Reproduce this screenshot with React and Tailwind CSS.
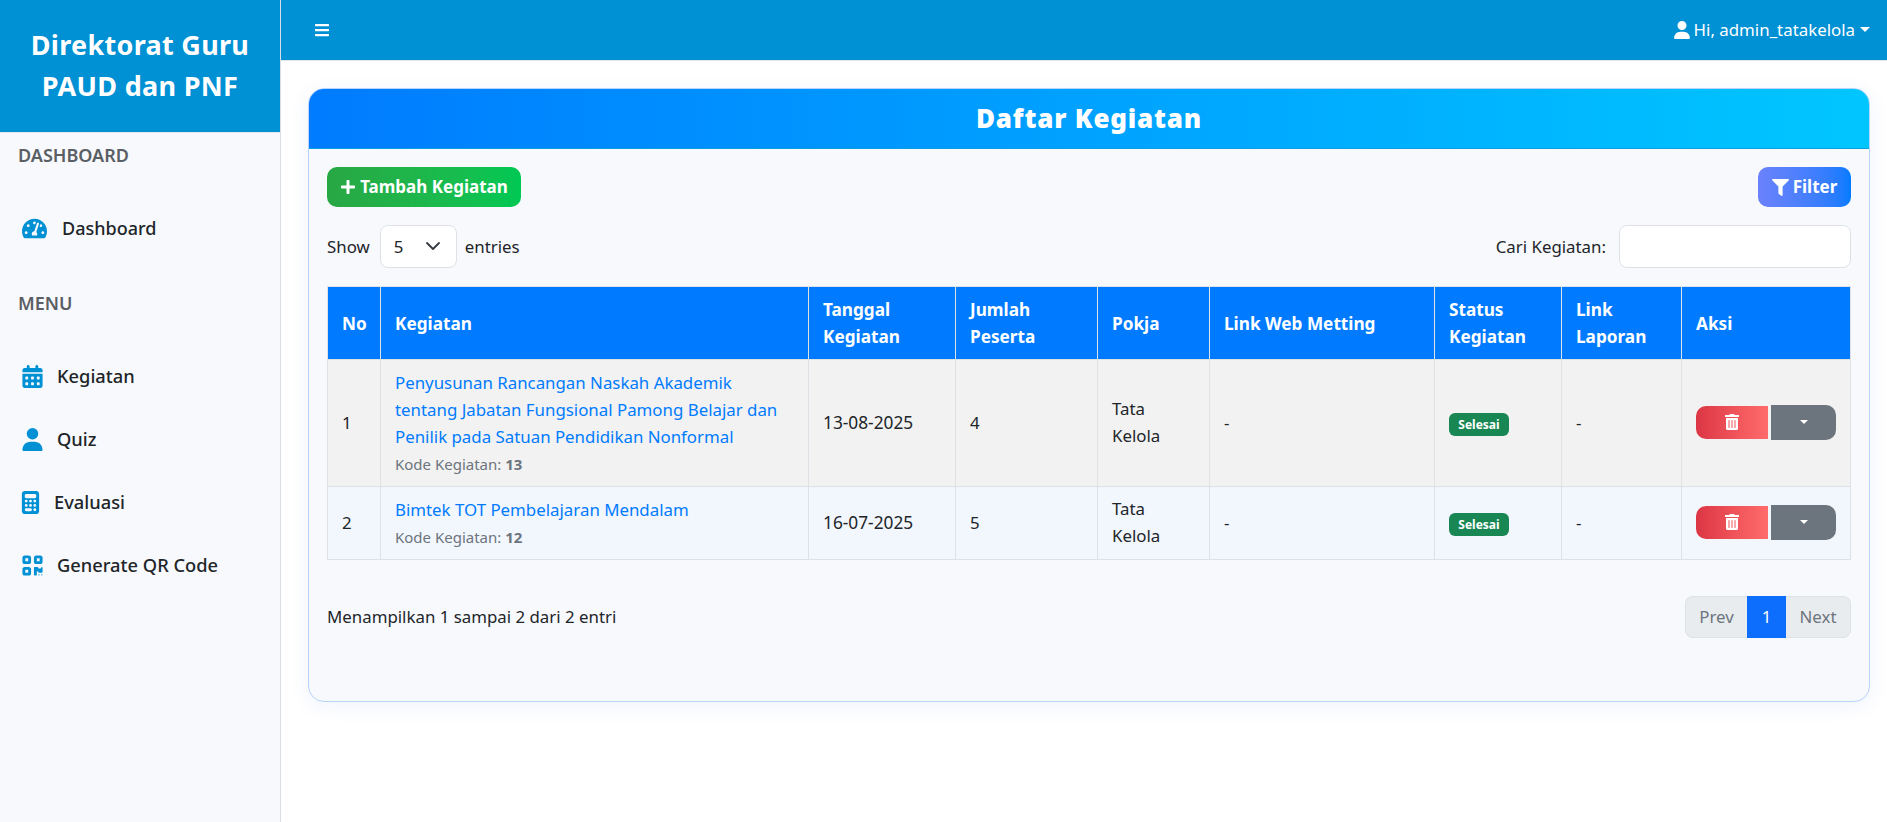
import { FaBars, FaFilter, FaPlus, FaTachometerAlt, FaTrashAlt } from 'react-icons/fa';
import { FaCalculator, FaCalendarDays, FaQrcode, FaUser } from 'react-icons/fa6';

const rows = [
  {
    no: 1,
    title: 'Penyusunan Rancangan Naskah Akademik tentang Jabatan Fungsional Pamong Belajar dan Penilik pada Satuan Pendidikan Nonformal',
    kode: 13,
    tanggal: '13-08-2025',
    peserta: 4,
  },
  {
    no: 2,
    title: 'Bimtek TOT Pembelajaran Mendalam',
    kode: 12,
    tanggal: '16-07-2025',
    peserta: 5,
  },
];

const menu = [
  { label: 'Kegiatan', icon: FaCalendarDays, w: 'w-[20px]' },
  { label: 'Quiz', icon: FaUser, w: 'w-[20px]' },
  { label: 'Evaluasi', icon: FaCalculator, w: 'w-[17px]' },
  { label: 'Generate QR Code', icon: FaQrcode, w: 'w-[20px]' },
];

const headers = ['No', 'Kegiatan', 'Tanggal Kegiatan', 'Jumlah Peserta', 'Pokja', 'Link Web Metting', 'Status Kegiatan', 'Link Laporan', 'Aksi'];

const Sidebar = () => (
  <aside className="w-[281px] shrink-0 min-h-[822px] bg-[#f8f9fc] border-r border-[#d9dee4]">
    <div className="h-[133px] bg-[#0090d4] border-b border-[#e3e6ea] flex items-center justify-center text-center">
      <h1 className="text-white font-bold text-[27px] leading-[41px] tracking-[0.3px] pb-[2px]">
        Direktorat Guru<br />PAUD dan PNF
      </h1>
    </div>
    <p className="pl-[18px] mt-[10px] text-[18px] leading-[24px] font-semibold text-[#5a5f65]">DASHBOARD</p>
    <div className="mt-[49px] pl-[22px] flex items-center h-[24px] text-[#212529]">
      <FaTachometerAlt className="text-[25px] text-[#0090d4]" />
      <span className="ml-[15px] text-[18px] font-medium">Dashboard</span>
    </div>
    <p className="pl-[18px] mt-[51px] text-[18px] leading-[24px] font-semibold text-[#5a5f65]">MENU</p>
    <nav className="mt-[49px] pl-[22px] flex flex-col gap-[39px]">
      {menu.map((item) => (
        <div key={item.label} className="flex items-center h-[24px] text-[#212529]">
          <div className={`${item.w} flex justify-center`}>
            <item.icon className="shrink-0 text-[23px] text-[#0090d4]" />
          </div>
          <span className="ml-[15px] text-[18.3px] font-medium">{item.label}</span>
        </div>
      ))}
    </nav>
  </aside>
);

const Topbar = () => (
  <header className="h-[61px] bg-[#0090d4] border-b border-[#e3e6ea] flex items-center justify-between pl-[33px] pr-[17px] text-white">
    <FaBars className="text-[16px]" />
    <div className="flex items-center text-[16.85px]">
      <FaUser className="text-[18px] mr-[3px]" />
      <span>Hi, admin_tatakelola</span>
      <span className="ml-[5px] border-x-[5px] border-t-[5px] border-x-transparent border-t-white" />
    </div>
  </header>
);

const DataTable = () => (
  <table className="w-[1523px] table-fixed border-collapse text-[16.85px] leading-[27px]">
    <colgroup>
      <col className="w-[53px]" />
      <col className="w-[428px]" />
      <col className="w-[147px]" />
      <col className="w-[142px]" />
      <col className="w-[112px]" />
      <col className="w-[225px]" />
      <col className="w-[127px]" />
      <col className="w-[120px]" />
      <col className="w-[169px]" />
    </colgroup>
    <thead>
      <tr className="h-[72px] bg-[#007bff] text-white">
        {headers.map((h) => (
          <th key={h} className="border border-[#dee2e6] px-[14px] py-[9px] text-left font-bold text-[17.2px]">{h}</th>
        ))}
      </tr>
    </thead>
    <tbody>
      {rows.map((row) => (
        <tr key={row.no} className={row.no === 1 ? 'bg-[#f2f2f2]' : 'bg-[#f2f6fd]'}>
          <td className="border border-[#dee2e6] px-[14px] pt-[8px] pb-[10px] text-[#212529]">{row.no}</td>
          <td className="border border-[#dee2e6] px-[14px] pt-[9px] pb-[11px]">
            <a href="#" className="text-[#007bff]">{row.title}</a>
            <div className="mt-[3px] text-[15px] leading-[22px] text-[#6c757d]">
              Kode Kegiatan: <b>{row.kode}</b>
            </div>
          </td>
          <td className="border border-[#dee2e6] px-[14px] pt-[8px] pb-[10px] text-[17.3px] text-[#212529]">{row.tanggal}</td>
          <td className="border border-[#dee2e6] px-[14px] pt-[8px] pb-[10px] text-[#212529]">{row.peserta}</td>
          <td className="border border-[#dee2e6] px-[14px] pt-[8px] pb-[10px] text-[#212529]">Tata Kelola</td>
          <td className="border border-[#dee2e6] px-[14px] pt-[8px] pb-[10px] text-[#212529]">-</td>
          <td className="border border-[#dee2e6] px-[14px] pt-[8px] pb-[10px]">
            <span className="inline-flex items-center justify-center w-[60px] h-[23px] rounded-[6px] bg-[#198754] text-white text-[12px] font-bold">Selesai</span>
          </td>
          <td className="border border-[#dee2e6] px-[14px] pt-[8px] pb-[10px] text-[#212529]">-</td>
          <td className="border border-[#dee2e6] px-[14px] pt-[8px] pb-[10px]">
            <div className="flex items-center">
              <button className="w-[73px] h-[33px] flex items-center justify-center rounded-l-[10px] bg-linear-to-r from-[#dc3545] to-[#ff6b6b] text-white text-[16px]">
                <FaTrashAlt />
              </button>
              <button className="ml-[3px] w-[65px] h-[35px] flex items-center justify-center rounded-r-[10px] bg-[#6c757d]">
                <span className="border-x-[4px] border-t-[4px] border-x-transparent border-t-white" />
              </button>
            </div>
          </td>
        </tr>
      ))}
    </tbody>
  </table>
);

const App = () => (
  <div className="flex min-h-[822px] bg-white font-['Noto_Sans',sans-serif] overflow-hidden">
    <Sidebar />
    <main className="flex-1 min-w-0">
      <Topbar />
      <div className="pl-[27px] pr-[17px] pt-[27px]">
        <section className="h-[614px] rounded-[16px] border border-[#b8d4fb] bg-[#f8f9fd] shadow-[0_4px_20px_rgba(0,90,200,0.07)] overflow-hidden">
          <div className="h-[60px] flex items-center justify-center bg-linear-to-r from-[#007bff] to-[#00c6ff] border-b border-[#0aa0e0]">
            <h2 className="text-white text-[26px] font-black tracking-[0.8px]">Daftar Kegiatan</h2>
          </div>
          <div className="px-[18px] pt-[18px]">
            <div className="flex items-center justify-between">
              <button className="w-[194px] h-[40px] rounded-[10px] bg-linear-to-r from-[#28a745] to-[#00c853] text-white font-bold text-[17px] flex items-center justify-center">
                <FaPlus className="text-[16px] mr-[4px]" />
                Tambah Kegiatan
              </button>
              <button className="w-[93px] h-[40px] rounded-[10px] bg-linear-to-r from-[#6a82fb] to-[#007bff] text-white font-bold text-[17px] flex items-center justify-center">
                <FaFilter className="text-[17px] mr-[4px]" />
                Filter
              </button>
            </div>
            <div className="mt-[18px] flex items-center justify-between text-[16.85px] text-[#212529]">
              <div className="flex items-center">
                <span>Show</span>
                <div className="relative ml-[10px] mr-[8px]">
                  <select className="w-[77px] h-[43px] pl-[13px] rounded-[8px] border border-[#dee2e6] bg-white appearance-none">
                    <option>5</option>
                  </select>
                  <svg className="absolute right-[16px] top-[13px] pointer-events-none" width="16" height="16" viewBox="0 0 16 16" fill="none" stroke="#343a40" strokeWidth="1.8" strokeLinecap="round" strokeLinejoin="round">
                    <path d="M2 5l6 6 6-6" />
                  </svg>
                </div>
                <span>entries</span>
              </div>
              <div className="flex items-center">
                <span className="mr-[13px]">Cari Kegiatan:</span>
                <input className="w-[232px] h-[43px] rounded-[8px] border border-[#dee2e6] bg-white" />
              </div>
            </div>
            <div className="mt-[18px]">
              <DataTable />
            </div>
            <div className="mt-[36px] flex items-center justify-between text-[16.85px] text-[#212529]">
              <span>Menampilkan 1 sampai 2 dari 2 entri</span>
              <div className="flex h-[42px] items-stretch">
                <span className="w-[62px] flex items-center justify-center rounded-l-[8px] border border-r-0 border-[#dee2e6] bg-[#e9ecef] text-[#6c757d]">Prev</span>
                <span className="w-[39px] flex items-center justify-center bg-[#0d6efd] text-white">1</span>
                <span className="w-[65px] flex items-center justify-center rounded-r-[8px] border border-l-0 border-[#dee2e6] bg-[#e9ecef] text-[#6c757d]">Next</span>
              </div>
            </div>
          </div>
        </section>
      </div>
    </main>
  </div>
);

export default App;
